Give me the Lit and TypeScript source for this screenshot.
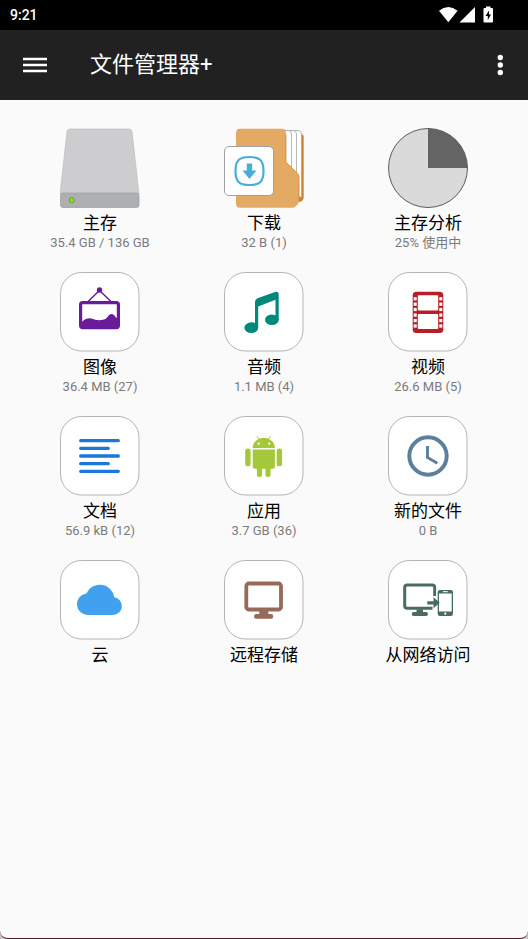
import { LitElement, html, svg, css, SVGTemplateResult } from "lit";
import { customElement, property } from "lit/decorators.js";

interface Entry {
  label: string;
  detail?: string;
  icon: SVGTemplateResult;
  tile: boolean;
}

const drive = svg`
  <path d="M10 1H69Q71.500 1 72 3.500L79 66H0L7 3.500Q7.500 1 10 1Z" fill="#cdcdcf" stroke="#bfbfc1" stroke-width=".7"/>
  <rect x=".5" y="65" width="78.500" height="14.500" rx="2.500" fill="#adafb1" stroke="#9fa1a3" stroke-width=".8"/>
  <circle cx="11.700" cy="72.200" r="2.600" fill="#9bd41c" stroke="#57a83c" stroke-width="1"/>`;

const download = svg`
  <path d="M60 6H77Q79.700 6 79.700 9V69Q79.700 74 74 74H60Z" fill="#c98534"/>
  <path d="M58 2.500H74Q77.500 2.500 77.500 6V69H58Z" fill="#fff" stroke="#a5a5a8" stroke-width=".8"/>
  <path d="M58 2.500H69Q72.500 2.500 72.500 6V69H58Z" fill="#fff" stroke="#a5a5a8" stroke-width=".8"/>
  <path d="M58 2.500H64Q67.500 2.500 67.500 6V69H58Z" fill="#fff" stroke="#a5a5a8" stroke-width=".8"/>
  <path d="M16 .8H58Q62 .8 62 5V34L73.500 45.500Q75 47 75 49V73Q75 75 73.500 76.500L71.500 78.500Q70.500 79.700 68.500 79.700H16Q12 79.700 12 76V5Q12 .8 16 .8Z" fill="#e2aa62"/>
  <path d="M62 7V34L73.500 45.500Q75 47 75 49V73" fill="none" stroke="#c98534" stroke-width=".8"/>
  <rect x=".5" y="18.500" width="49" height="49" rx="4.500" fill="#fff" stroke="#a3a0a5"/>
  <path d="M25.500 29C36 29 39.500 32.500 39.500 43S36 57 25.500 57S11.500 53.500 11.500 43S15 29 25.500 29Z" fill="none" stroke="#48aed8" stroke-width="2.200"/>
  <path d="M22.800 35.500H28.200V42.500H32.500L25.500 51L18.500 42.500H22.800Z" fill="#48aed8"/>`;

const pie = svg`
  <circle cx="40" cy="40" r="39.500" fill="#dadada"/>
  <path d="M40 40V.5A39.500 39.500 0 0 1 79.500 40Z" fill="#646464"/>
  <circle cx="40" cy="40" r="39.500" fill="none" stroke="#5c5c5c" stroke-width="1"/>`;

const picture = svg`
  <path d="M27.500 30L39.500 18.500L51.500 30" fill="none" stroke="#6a1b9a" stroke-width="1.500"/>
  <circle cx="39.500" cy="18" r="2.700" fill="#6a1b9a"/>
  <rect x="20.600" y="30.600" width="37.800" height="25" rx="2" fill="#fff" stroke="#6a1b9a" stroke-width="3.200"/>
  <path d="M21 51C25 46.500 29 45.500 33 47S40 48.500 44 47.500C48 46.500 48 42 51.500 42C55 42 55 46 58.500 47V56H21Z" fill="#6a1b9a"/>`;

const music = svg`
  <path d="M31 30Q31 27.200 33.500 26.200L51 19.900Q54.700 19 54.700 22.500V48H51.500V27.800L34.200 34.600V56H31Z" fill="#00897b"/>
  <ellipse cx="27.300" cy="55.700" rx="6.900" ry="5.400" fill="#00897b"/>
  <ellipse cx="47.900" cy="47.800" rx="6.900" ry="5.300" fill="#00897b"/>`;

const film = svg`
  <rect x="24.700" y="19.700" width="30.600" height="41.300" rx="3.500" fill="#b71f26"/>
  <rect x="29.800" y="23.200" width="20.400" height="15.200" rx=".8" fill="#fff"/>
  <rect x="29.800" y="42" width="20.400" height="15" rx=".8" fill="#fff"/>
  ${[25.2, 30.6, 35.9, 41.5, 47, 52.4].map(
    (y) => svg`
      <rect x="25.700" y=${y} width="3" height="3.200" fill="#fff"/>
      <rect x="51.300" y=${y} width="3" height="3.200" fill="#fff"/>`,
  )}`;

const lines = svg`
  <path d="M20.700 24.700H58.300M20.700 32.300H48.300M20.700 40H58.300M20.700 47.700H48.300M20.700 55.300H58.300" stroke="#1b77d9" stroke-width="3.300" stroke-linecap="round"/>`;

const robot = svg`
  <path d="M33.200 20.200L35.400 24M46.400 20.200L44.200 24" stroke="#a4c83a" stroke-width=".9" stroke-linecap="round"/>
  <path d="M28.700 32A11.100 10.200 0 0 1 50.900 32Z" fill="#a4c83a"/>
  <circle cx="34.700" cy="27.700" r="1.100" fill="#fff"/>
  <circle cx="45.200" cy="27.700" r="1.100" fill="#fff"/>
  <path d="M28.700 33.500H50.900V50.500Q50.900 52.700 48.700 52.700H46.600V58.500Q46.600 61 44 61T41.400 58.500V52.700H38.100V58.500Q38.100 61 35.500 61T32.900 58.500V52.700H30.900Q28.700 52.700 28.700 50.500Z" fill="#a4c83a"/>
  <rect x="21.200" y="32.500" width="5.400" height="17.800" rx="2.500" fill="#a4c83a"/>
  <rect x="52.700" y="32.500" width="5.400" height="17.800" rx="2.500" fill="#a4c83a"/>`;

const clock = svg`
  <circle cx="40" cy="40" r="18.700" fill="none" stroke="#5c809b" stroke-width="3.900"/>
  <path d="M39.500 30V41.500L49.300 47.300" fill="none" stroke="#5c809b" stroke-width="2.900"/>`;

const cloud = svg`
  <path d="M27.700 55A10.800 10.800 0 0 1 26.300 33.500A14.700 14.700 0 0 1 54.300 37.300A8.900 8.900 0 0 1 53 55Z" fill="#42a1ee"/>`;

const monitor = svg`
  <rect x="22.300" y="23.500" width="34.700" height="26" rx="2.500" fill="#fff" stroke="#966a5a" stroke-width="3.800"/>
  <path d="M35.300 51H44.300V54H47Q49.300 54 49.300 56.400T47 58.800H32.300Q30 58.800 30 56.400T32.300 54H35.300Z" fill="#966a5a"/>`;

const network = svg`
  <rect x="16.700" y="25" width="30" height="23.300" rx="2.500" fill="none" stroke="#4a6b60" stroke-width="3"/>
  <path d="M28.500 49.500H35V52H38Q40 52 40 54T38 56H25.700Q23.700 56 23.700 54T25.700 52H28.500Z" fill="#4a6b60"/>
  <path d="M44.500 36H49V50H44.500Z" fill="#fff"/>
  <path d="M48.500 29.500H66V56.500H48.500Z" fill="#fff"/>
  <rect x="49.700" y="30" width="15.300" height="26" rx="2.200" fill="#4a6b60"/>
  <rect x="51" y="33.500" width="12.700" height="18" fill="#fff"/>
  <path d="M55 31.700H59.800" stroke="#fff" stroke-width="1"/>
  <circle cx="57.300" cy="53.700" r="1.100" fill="#fff"/>
  <path d="M39.300 41.200H45.500V37.300L51.800 42.800L45.500 48.300V44.400H39.300Z" fill="#4a6b60"/>`;

@customElement("file-entry")
export class FileEntry extends LitElement {
  static styles = css`
    :host {
      display: flex;
      justify-content: center;
    }
    .entry {
      display: flex;
      flex-direction: column;
      align-items: center;
      width: 100%;
      padding: 0;
      border: 0;
      background: none;
      color: #000;
      font-family: Roboto, "Noto Sans CJK SC", sans-serif;
      cursor: pointer;
    }
    .icon {
      display: block;
      width: 80px;
      height: 80px;
    }
    .label {
      margin-top: 3px;
      font-size: 17px;
      line-height: 24px;
      white-space: nowrap;
    }
    .detail {
      color: #7b7b7b;
      font-size: 13px;
      line-height: 16px;
      white-space: nowrap;
    }
  `;

  @property({ attribute: false }) entry!: Entry;

  render() {
    const { label, detail, icon, tile } = this.entry;
    return html`
      <button class="entry" type="button">
        <svg class="icon" viewBox="0 0 80 80" aria-hidden="true">
          ${tile
            ? svg`<rect x=".5" y=".5" width="78.500" height="78.500" rx="21" fill="#fff" stroke="#b4b4b4" stroke-width="1"/>`
            : null}
          ${icon}
        </svg>
        <span class="label">${label}</span>
        ${detail ? html`<span class="detail">${detail}</span>` : null}
      </button>
    `;
  }
}

@customElement("app-root")
export class AppRoot extends LitElement {
  static styles = css`
    :host {
      display: block;
      min-height: 100vh;
      background: #c9c3c6;
      font-family: Roboto, "Noto Sans CJK SC", sans-serif;
    }
    .screen {
      box-sizing: border-box;
      display: flex;
      flex-direction: column;
      min-height: 100vh;
      border-bottom: 1px solid #4f1a2c;
      border-radius: 0 0 8px 8px;
      background: #fafafa;
    }
    .status {
      display: flex;
      align-items: center;
      justify-content: space-between;
      height: 30px;
      padding: 0 34px 0 10px;
      background: #000;
      color: #fff;
      font-size: 14px;
      font-weight: 500;
    }
    .signals {
      display: block;
      width: 56px;
      height: 18px;
    }
    .bar {
      display: flex;
      align-items: center;
      height: 70px;
      padding: 0 16px 0 23px;
      background: #212121;
      color: #fff;
    }
    .tool {
      display: flex;
      padding: 0;
      border: 0;
      background: none;
      cursor: pointer;
    }
    .title {
      flex: 1;
      margin: 0 0 0 43px;
      font-size: 22px;
      font-weight: 400;
      line-height: 32px;
    }
    .grid {
      display: grid;
      grid-template-columns: repeat(3, 1fr);
      gap: 21px 0;
      padding: 28px 18px;
    }
  `;

  private entries: Entry[] = [
    { label: "主存", detail: "35.4 GB / 136 GB", icon: drive, tile: false },
    { label: "下载", detail: "32 B (1)", icon: download, tile: false },
    { label: "主存分析", detail: "25% 使用中", icon: pie, tile: false },
    { label: "图像", detail: "36.4 MB (27)", icon: picture, tile: true },
    { label: "音频", detail: "1.1 MB (4)", icon: music, tile: true },
    { label: "视频", detail: "26.6 MB (5)", icon: film, tile: true },
    { label: "文档", detail: "56.9 kB (12)", icon: lines, tile: true },
    { label: "应用", detail: "3.7 GB (36)", icon: robot, tile: true },
    { label: "新的文件", detail: "0 B", icon: clock, tile: true },
    { label: "云", icon: cloud, tile: true },
    { label: "远程存储", icon: monitor, tile: true },
    { label: "从网络访问", icon: network, tile: true },
  ];

  render() {
    return html`
      <div class="screen">
        <div class="status">
          <span>9:21</span>
          <svg class="signals" viewBox="0 0 56 18" aria-hidden="true">
            <path d="M1 4.700Q10.300-2.500 19.600 4.700L10.300 16.300Z" fill="#fff" />
            <path d="M37 1V16.500H21.500Z" fill="#fff" />
            <path d="M48 .5H52.500V2H54Q55 2 55 3V15.500Q55 16.500 54 16.500H46.500Q45.500 16.500 45.500 15.500V3Q45.500 2 46.500 2H48Z" fill="#fff" />
            <path d="M51 4.500L47.500 10H49.800V14L53 8.500H51Z" fill="#000" />
          </svg>
        </div>
        <header class="bar">
          <button class="tool" type="button" aria-label="菜单">
            <svg width="24" height="18" viewBox="0 0 24 18">
              <path d="M0 3H24M0 9H24M0 15H24" stroke="#fff" stroke-width="2.400" />
            </svg>
          </button>
          <h1 class="title">文件管理器+</h1>
          <button class="tool" type="button" aria-label="更多选项">
            <svg width="24" height="24" viewBox="0 0 24 24" fill="#fff">
              <circle cx="12.300" cy="4.500" r="2.700" />
              <circle cx="12.300" cy="12" r="2.700" />
              <circle cx="12.300" cy="19.500" r="2.700" />
            </svg>
          </button>
        </header>
        <main class="grid">
          ${this.entries.map((e) => html`<file-entry .entry=${e}></file-entry>`)}
        </main>
      </div>
    `;
  }
}
